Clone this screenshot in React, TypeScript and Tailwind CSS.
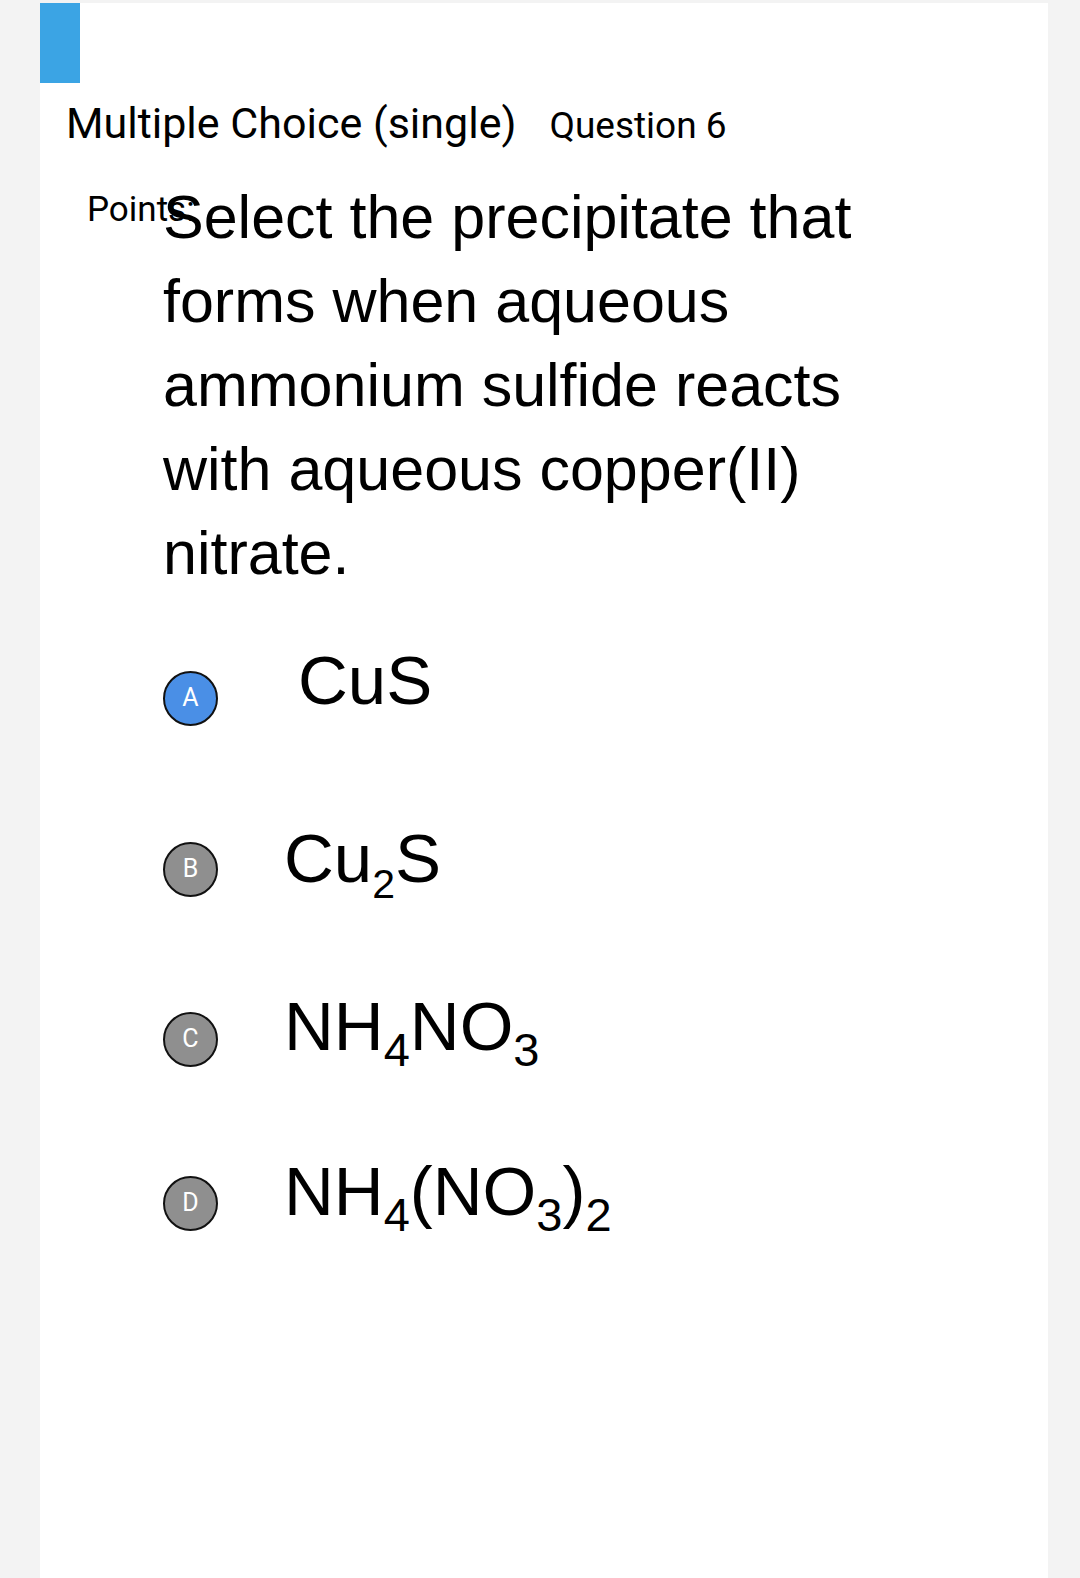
import React from 'react';

type Option = {
  letter: string;
  selected?: boolean;
  rowClass: string;
  textClass: string;
  formula: React.ReactNode;
};

const sub = (s: string, cls = 'text-[47px]') => (
  <span className={`${cls} relative top-[16px] leading-none`}>{s}</span>
);

const options: Option[] = [
  {
    letter: 'A',
    selected: true,
    rowClass: 'mt-[48px]',
    textClass: 'ml-[80px] mb-[36px]',
    formula: <>CuS</>,
  },
  {
    letter: 'B',
    rowClass: 'mt-[61px]',
    textClass: 'ml-[66px] mb-[21px]',
    formula: (
      <>
        Cu{sub('2', 'text-[41px]')}S
      </>
    ),
  },
  {
    letter: 'C',
    rowClass: 'mt-[60px]',
    textClass: 'ml-[66px] mb-[26px]',
    formula: (
      <>
        NH{sub('4')}NO{sub('3')}
      </>
    ),
  },
  {
    letter: 'D',
    rowClass: 'mt-[54px]',
    textClass: 'ml-[66px] mb-[24px]',
    formula: (
      <>
        NH{sub('4')}(NO{sub('3')}){sub('2')}
      </>
    ),
  },
];

export default function App() {
  return (
    <div className="min-h-screen bg-[#f3f3f3] pt-[3px]">
      <div className="ml-[40px] w-[1008px] min-h-[1575px] bg-white">
        {/* blue marker */}
        <div className="w-[40px] h-[80px] bg-[#3ba4e4]" />

        {/* header */}
        <div className="mt-[16px] pl-[26px] flex items-baseline gap-[33px] text-black font-['Roboto',sans-serif] leading-[48px]">
          <span className="text-[43px]">Multiple Choice (single)</span>
          <span className="text-[37px]">Question 6</span>
        </div>

        {/* question */}
        <div className="mt-[25px] pl-[47px] flex items-start">
          <div className="w-[76px] shrink-0 mt-[17px] whitespace-nowrap text-[35px] leading-[35px] text-black font-['Roboto',sans-serif]">
            Points:
          </div>
          <p className="relative w-[740px] text-[61px] leading-[84px] text-black font-['Liberation_Sans',Arial,sans-serif]">
            Select the precipitate that forms when aqueous ammonium sulfide reacts with aqueous copper(II) nitrate.
          </p>
        </div>

        {/* options */}
        <div className="pl-[123px] flex flex-col">
          {options.map((o) => (
            <div key={o.letter} className={`${o.rowClass} h-[110px] flex items-center`}>
              <div
                className={`w-[55px] h-[55px] shrink-0 rounded-full border-2 border-[#111] flex items-center justify-center text-white text-[25px] font-['Roboto',sans-serif] ${
                  o.selected ? 'bg-[#4a8fe6]' : 'bg-[#8f8f8f]'
                }`}
              >
                {o.letter}
              </div>
              <div
                className={`${o.textClass} whitespace-nowrap text-[69px] leading-[69px] text-black font-['Liberation_Sans',Arial,sans-serif]`}
              >
                {o.formula}
              </div>
            </div>
          ))}
        </div>
      </div>
    </div>
  );
}
